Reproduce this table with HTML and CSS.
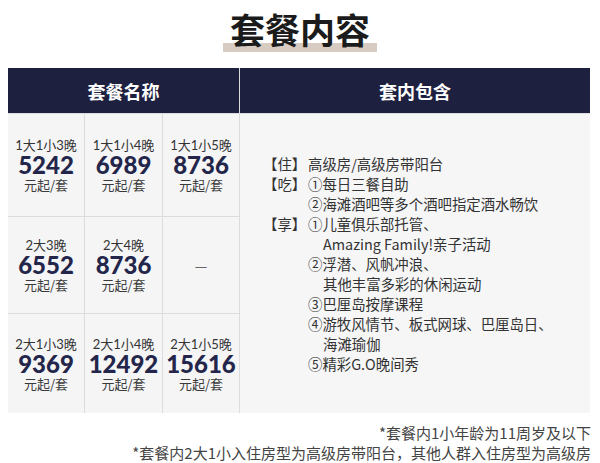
FILE: index.html
```html
<!DOCTYPE html>
<html lang="zh-CN">
<head>
<meta charset="utf-8">
<link rel="stylesheet" href="styles.css">
</head>
<body>
<div class="title-wrap"><h1 class="title">套餐内容</h1></div>
<div class="table">
  <div class="th th-left">套餐名称</div>
  <div class="th th-right">套内包含</div>

  <div class="cell"><div class="lab">1大1小3晚</div><div class="num">5242</div><div class="unit">元起/套</div></div>
  <div class="cell"><div class="lab">1大1小4晚</div><div class="num">6989</div><div class="unit">元起/套</div></div>
  <div class="cell"><div class="lab">1大1小5晚</div><div class="num">8736</div><div class="unit">元起/套</div></div>

  <div class="incl">
    <div class="inc-row"><span class="tag">【住】</span><div class="items"><div>高级房/高级房带阳台</div></div></div>
    <div class="inc-row"><span class="tag">【吃】</span><div class="items"><div>①每日三餐自助</div><div>②海滩酒吧等多个酒吧指定酒水畅饮</div></div></div>
    <div class="inc-row"><span class="tag">【享】</span><div class="items">
      <div>①儿童俱乐部托管、</div>
      <div class="cont">Amazing Family!亲子活动</div>
      <div>②浮潜、风帆冲浪、</div>
      <div class="cont">其他丰富多彩的休闲运动</div>
      <div>③巴厘岛按摩课程</div>
      <div>④游牧风情节、板式网球、巴厘岛日、</div>
      <div class="cont">海滩瑜伽</div>
      <div>⑤精彩G.O晚间秀</div>
    </div></div>
  </div>

  <div class="cell"><div class="lab">2大3晚</div><div class="num">6552</div><div class="unit">元起/套</div></div>
  <div class="cell"><div class="lab">2大4晚</div><div class="num">8736</div><div class="unit">元起/套</div></div>
  <div class="cell"><div class="dash">—</div></div>

  <div class="cell"><div class="lab">2大1小3晚</div><div class="num">9369</div><div class="unit">元起/套</div></div>
  <div class="cell"><div class="lab">2大1小4晚</div><div class="num">12492</div><div class="unit">元起/套</div></div>
  <div class="cell"><div class="lab">2大1小5晚</div><div class="num">15616</div><div class="unit">元起/套</div></div>
</div>
<div class="notes">
  <p>*套餐内1小年龄为11周岁及以下</p>
  <p>*套餐内2大1小入住房型为高级房带阳台，其他人群入住房型为高级房</p>
</div>
</body>
</html>
```

FILE: styles.css
```css
html, body {
  margin: 0;
  padding: 0;
  background: #ffffff;
  font-family: "Noto Sans CJK SC", "Noto Sans", sans-serif;
  color: #333333;
}

.title-wrap {
  display: flex;
  justify-content: center;
  padding-top: 8px;
  margin-bottom: 16px;
}

.title {
  margin: 0;
  font-size: 35px;
  font-weight: 700;
  line-height: 42px;
  padding: 0 7px 2px;
  color: #1b1b1b;
  background: linear-gradient(#d8ccc2, #d8ccc2) left bottom / 100% 9px no-repeat;
}

.table {
  margin-left: 8px;
  width: 582px;
  display: grid;
  grid-template-columns: 76px 77px 76px 350px;
  grid-template-rows: 45px 102px 96px 99px;
  gap: 1px;
  background: #dcdcdf;
}

.th {
  background: #1e2040;
  color: #ffffff;
  font-size: 18px;
  font-weight: 700;
  display: flex;
  align-items: center;
  justify-content: center;
}

.th-left {
  grid-column: 1 / 4;
}

.th-right {
  grid-column: 4;
}

.cell {
  background: #f5f5f6;
  display: flex;
  flex-direction: column;
  align-items: center;
  justify-content: center;
}

.lab {
  font-family: "Lato", "Noto Sans CJK SC", sans-serif;
  font-size: 13px;
  line-height: 18px;
  color: #333333;
}

.num {
  font-family: "Lato", sans-serif;
  font-weight: 900;
  font-size: 24px;
  line-height: 22px;
  color: #23264a;
}

.unit {
  font-size: 13px;
  line-height: 18px;
  color: #3a3a3a;
}

.dash {
  font-size: 14px;
  color: #666666;
}

.incl {
  grid-column: 4;
  grid-row: 2 / 5;
  background: #f6f6f7;
  display: flex;
  flex-direction: column;
  justify-content: center;
  padding-left: 23px;
  font-size: 14.4px;
  line-height: 20px;
  color: #333333;
}

.inc-row {
  display: flex;
}

.tag {
  flex: none;
  width: 45px;
}

.cont {
  padding-left: 15px;
}

.notes {
  margin-top: 10px;
  padding-right: 9px;
  text-align: right;
  font-size: 15px;
  line-height: 20px;
  color: #444444;
}

.notes p {
  margin: 0;
}
```
